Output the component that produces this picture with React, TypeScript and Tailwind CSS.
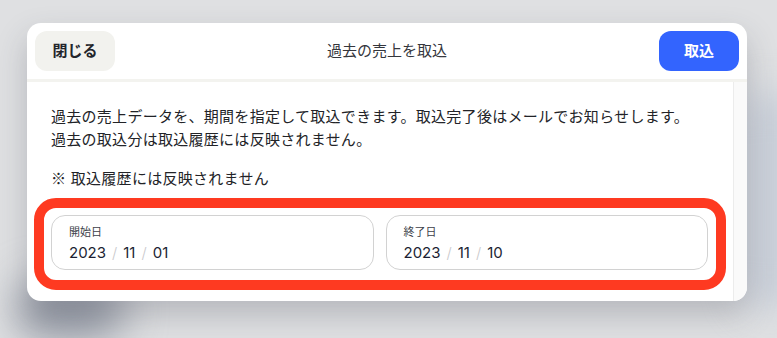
import React from 'react';

const font = { fontFamily: '"Inter", "Noto Sans CJK JP", sans-serif' };

function DateField({ label, y, m, d }: { label: string; y: string; m: string; d: string }) {
  return (
    <div className="flex-1 h-[55px] rounded-[14px] border border-[#d2d2d2] bg-white pl-[17px] pt-[9px]">
      <div className="text-[11px] leading-[14px] text-[#3d3f4a]">{label}</div>
      <div className="mt-[4px] flex items-center text-[15px] leading-[20px] text-[#1c1f33]">
        <span>{y}</span>
        <span className="mx-[6px] text-[#c9c9cc] font-light">/</span>
        <span>{m}</span>
        <span className="mx-[6px] text-[#c9c9cc] font-light">/</span>
        <span>{d}</span>
      </div>
    </div>
  );
}

export default function App() {
  return (
    <div className="relative w-[777px] h-[338px] overflow-hidden bg-[#dfe0e2]" style={font}>
      {/* blurred backdrop */}
      <div className="absolute left-[15px] top-[280px] w-[110px] h-[60px] rounded-full bg-[#959aa5] blur-[20px]" />
      <div className="absolute left-[740px] top-[90px] w-[60px] h-[220px] rounded-full bg-[#c8ced8] blur-[18px]" />

      <div className="relative ml-[27px] mt-[23px] w-[720px] h-[278px] rounded-[14px] bg-white overflow-hidden shadow-[0_14px_30px_rgba(60,65,80,0.25)] flex flex-col">
        <div className="h-[59px] flex items-center justify-between px-[8px] border-b-[3px] border-[#f3f3ef]">
          <button className="w-[80px] h-[40px] rounded-[12px] bg-[#f2f2ee] text-[15px] font-bold text-[#23252b]">
            閉じる
          </button>
          <div className="text-[15px] text-[#34363c]">過去の売上を取込</div>
          <button className="w-[80px] h-[40px] rounded-[12px] bg-[#3364fe] text-[15px] font-bold text-white">
            取込
          </button>
        </div>

        <div className="flex-1 flex">
          <div className="flex-1 pl-[24px] pr-[25px] pt-[23px]">
            <p className="text-[15px] leading-[23px] tracking-[0.28px] text-[#222327]">
              過去の売上データを、期間を指定して取込できます。取込完了後はメールでお知らせします。
              <br />
              過去の取込分は取込履歴には反映されません。
            </p>
            <p className="mt-[15px] text-[15px] leading-[23px] tracking-[0.28px] text-[#222327]">
              <span style={{ fontFamily: '"Noto Sans CJK JP", sans-serif' }}>※</span> 取込履歴には反映されません
            </p>

            <div className="mt-[8px] -ml-[17px] -mr-[18px] rounded-[22px] border-[10px] border-[#fe3a21] pl-[7px] pr-[8px] pt-[7px] pb-[10px] flex gap-[12px]">
              <DateField label="開始日" y="2023" m="11" d="01" />
              <DateField label="終了日" y="2023" m="11" d="10" />
            </div>
          </div>
          <div className="w-[14px] border-l border-[#ececec] bg-[#fafafa]" />
        </div>
      </div>
    </div>
  );
}
